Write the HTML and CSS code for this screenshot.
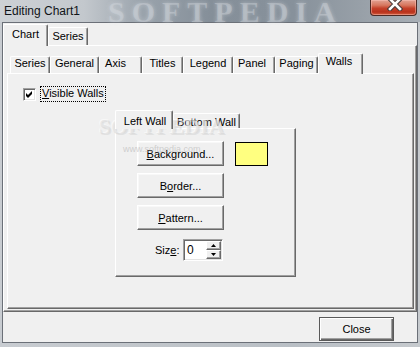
FILE: index.html
```html
<!DOCTYPE html>
<html>
<head>
<meta charset="utf-8">
<title>Editing Chart1</title>
<link rel="stylesheet" href="styles.css">
</head>
<body>
<div class="window">
  <div class="titlebar">
    <span class="title">Editing Chart1</span>
    <div class="tb-close">
      <svg class="tb-x" width="16" height="11" viewBox="0 0 16 11">
        <path d="M3 -1 L13 9 M13 -1 L3 9" stroke="#4a3a3a" stroke-width="4.6" stroke-linecap="square" fill="none"/>
        <path d="M3 -1 L13 9 M13 -1 L3 9" stroke="#ffffff" stroke-width="2.6" stroke-linecap="square" fill="none"/>
      </svg>
    </div>
  </div>

  <div class="client">
    <div class="outer-ctl">
      <div class="tabs outer-tabs">
        <div class="tab sel w-chart">Chart</div>
        <div class="tab w-oseries">Series</div>
      </div>
      <div class="panel outer-panel">
        <div class="inner-ctl">
          <div class="tabs inner-tabs">
            <div class="tab w-series">Series</div>
            <div class="tab w-general">General</div>
            <div class="tab w-axis">Axis</div>
            <div class="tab w-titles">Titles</div>
            <div class="tab w-legend">Legend</div>
            <div class="tab w-panel">Panel</div>
            <div class="tab w-paging">Paging</div>
            <div class="tab sel w-walls">Walls</div>
          </div>
          <div class="panel inner-panel">
            <div class="check-row">
              <span class="checkbox">
                <svg width="7" height="7" viewBox="0 0 7 7"><path d="M0 2 L2 4 L6 0 L6 3 L2 7 L0 5 Z" fill="#000"/></svg>
              </span>
              <span class="focus-label"><u>V</u>isible Walls</span>
            </div>

            <div class="walls-ctl">
              <div class="tabs walls-tabs">
                <div class="tab sel w-left">Left Wall</div>
                <div class="tab w-bottom">Bottom Wall</div>
              </div>
              <div class="panel walls-panel">
                <div class="btn-row">
                  <button class="btn wbtn"><u>B</u>ackground...</button>
                  <span class="swatch"></span>
                </div>
                <button class="btn wbtn gap"><span>B<u>o</u>rder...</span></button>
                <button class="btn wbtn gap"><u>P</u>attern...</button>
                <div class="size-row">
                  <span class="size-label">Siz<u>e</u>:</span>
                  <div class="spin">
                    <span class="spin-val">0</span>
                    <div class="spin-btns">
                      <span class="spin-b"><svg width="5" height="3" viewBox="0 0 5 3"><path d="M0 3 L2.5 0 L5 3 Z" fill="#000"/></svg></span>
                      <span class="spin-b"><svg width="5" height="3" viewBox="0 0 5 3"><path d="M0 0 L5 0 L2.5 3 Z" fill="#000"/></svg></span>
                    </div>
                  </div>
                </div>
              </div>
            </div>
          </div>
        </div>
      </div>
    </div>

    <div class="footer">
      <button class="btn default">Close</button>
    </div>
  </div>

  <span class="wm wm-title">SOFTPEDIA</span>
  <span class="wm wm-mid">SOFTPEDIA</span>
  <span class="wm wm-url">www.softpedia.com</span>
</div>
</body>
</html>
```

FILE: styles.css
```css
* { box-sizing: border-box; }
html, body { margin: 0; padding: 0; }
body {
  width: 420px;
  height: 347px;
  overflow: hidden;
  font: 11px "Liberation Sans", Arial, sans-serif;
  color: #000;
  background: #cfd3d8;
}
u { text-decoration: underline; text-underline-offset: 1px; }

.window {
  position: relative;
  width: 420px;
  height: 347px;
  display: flex;
  flex-direction: column;
  background: linear-gradient(90deg, #c8ccd1 0%, #c0c5ca 40%, #b9bfc5 70%, #c6cace 100%);
  overflow: hidden;
}

/* ---------- title bar ---------- */
.titlebar {
  height: 22px;
  flex: none;
  display: flex;
  justify-content: space-between;
  align-items: flex-start;
  background: linear-gradient(90deg, #cdd1d5 0%, #c3c8cd 20%, #9aa3ac 34%, #858f99 50%, #87919b 70%, #98a0a8 86%, #a8afb6 100%);
}
.title {
  font: 12px "Liberation Sans", Arial, sans-serif;
  color: #101418;
  margin: 5px 0 0 4px;
  line-height: 13px;
}
.tb-close {
  width: 47px;
  height: 16px;
  margin-right: 3px;
  border: 1px solid #4d2a24;
  border-top: none;
  border-radius: 0 0 4px 4px;
  background: linear-gradient(#e2a293 0%, #d7775f 35%, #c4412a 55%, #b9311b 80%, #d25f40 100%);
  box-shadow: inset 0 0 0 1px rgba(255, 200, 190, 0.45);
  display: flex;
  justify-content: center;
  align-items: flex-start;
}
.tb-x { margin-left: 2px; }

/* ---------- client ---------- */
.client {
  margin: 0 2px;
  height: 321px;
  flex: none;
  border: 1px solid #6b7078;
  background: #f0f0f0;
  display: flex;
  flex-direction: column;
}

/* ---------- tabs ---------- */
.tabs {
  display: flex;
  align-items: flex-end;
}
.tab {
  flex: none;
  background: #f0f0f0;
  border: 1px solid;
  border-color: #ffffff #696969 transparent #ffffff;
  border-bottom: none;
  border-radius: 2px 2px 0 0;
  box-shadow: inset -1px 0 0 #a0a0a0;
  text-align: center;
  line-height: 13px;
  white-space: nowrap;
  overflow: visible;
}
.tab.sel {
  margin-bottom: -1px;
  z-index: 2;
}

.outer-ctl { padding-top: 1px; }
.outer-tabs { height: 21px; }
.outer-tabs .tab { height: 18px; padding-top: 2px; }
.outer-tabs .tab.sel { height: 22px; padding-top: 3px; }
.w-chart { width: 45px; }
.w-oseries { width: 40px; }

.inner-ctl { margin: 7px 0 0 3px; }
.inner-tabs { height: 20px; padding-left: 3px; }
.inner-tabs .tab { height: 17px; padding-top: 0; }
.inner-tabs .tab.sel { height: 21px; padding-top: 1px; }
.w-series { width: 40px; }
.w-general { width: 49px; }
.w-axis { width: 43px; padding-right: 10px; }
.w-titles { width: 41px; }
.w-legend { width: 50px; }
.w-panel { width: 42px; padding-right: 4px; }
.w-paging { width: 43px; }
.w-walls { width: 45px; padding-right: 3px; }

.walls-tabs { height: 18px; }
.walls-tabs .tab { height: 15px; padding-top: 2px; }
.walls-tabs .tab.sel { height: 19px; padding-top: 4px; }
.w-left { width: 58px; padding-left: 2px; }
.w-bottom { width: 67px; }

/* ---------- panels ---------- */
.panel {
  background: #f0f0f0;
  border: 1px solid;
  border-color: #ffffff #696969 #696969 #ffffff;
  box-shadow: inset -1px -1px 0 #a0a0a0;
}
.outer-panel { height: 267px; }
.inner-panel { width: 407px; height: 236px; }
.walls-panel {
  width: 181px;
  height: 149px;
  padding: 12px 0 0 21px;
  display: flex;
  flex-direction: column;
  align-items: flex-start;
}

/* ---------- checkbox ---------- */
.check-row {
  display: flex;
  align-items: flex-start;
  height: 16px;
  margin: 12px 0 0 15px;
}
.checkbox {
  width: 13px;
  height: 13px;
  margin-top: 2px;
  background: #ffffff;
  border: 1px solid;
  border-color: #a0a0a0 #ffffff #ffffff #a0a0a0;
  box-shadow: inset 1px 1px 0 #696969, inset -1px -1px 0 #e3e3e3;
  display: flex;
  align-items: center;
  justify-content: center;
}
.focus-label {
  margin-left: 4px;
  height: 16px;
  border: 1px dotted #000;
  padding: 0 1px;
  line-height: 13px;
}

.walls-ctl { margin: 8px 0 0 107px; }

/* ---------- buttons ---------- */
.btn {
  font: 11px "Liberation Sans", Arial, sans-serif;
  color: #000;
  background: #f0f0f0;
  padding: 0;
  margin: 0;
  border: 1px solid;
  border-color: #ffffff #696969 #696969 #ffffff;
  box-shadow: inset -1px -1px 0 #a0a0a0, inset 1px 1px 0 #f8f8f8;
  display: flex;
  align-items: center;
  justify-content: center;
}
.wbtn { width: 87px; height: 25px; }
.gap { margin-top: 7px; }
.btn-row { display: flex; align-items: flex-start; }
.swatch {
  width: 33px;
  height: 24px;
  margin: 1px 0 0 11px;
  background: #ffff80;
  border: 1px solid #000;
}

.size-row {
  display: flex;
  align-items: center;
  margin: 9px 0 0 18px;
}
.size-label { width: 28px; }
.spin {
  width: 40px;
  height: 22px;
  background: #ffffff;
  border: 1px solid;
  border-color: #a0a0a0 #ffffff #ffffff #a0a0a0;
  box-shadow: inset 1px 1px 0 #696969, inset -1px -1px 0 #e3e3e3;
  padding: 1px;
  display: flex;
  align-items: stretch;
}
.spin-val {
  flex: 1;
  padding-left: 2px;
  line-height: 18px;
  font-size: 12px;
}
.spin-btns {
  width: 15px;
  display: flex;
  flex-direction: column;
}
.spin-b {
  flex: 1;
  background: #f0f0f0;
  border: 1px solid;
  border-color: #ffffff #696969 #696969 #ffffff;
  box-shadow: inset -1px -1px 0 #a0a0a0;
  display: flex;
  align-items: center;
  justify-content: center;
}

/* ---------- footer ---------- */
.footer {
  height: 30px;
  padding-top: 5px;
  display: flex;
  justify-content: flex-end;
  align-items: flex-start;
}
.default {
  width: 75px;
  height: 24px;
  margin-right: 23px;
  border: 1px solid #5a5a5a;
  box-shadow: inset 1px 1px 0 #ffffff, inset -1px -1px 0 #696969, inset -2px -2px 0 #a0a0a0;
}

/* ---------- watermarks (overlays) ---------- */
.wm {
  position: absolute;
  pointer-events: none;
  white-space: nowrap;
}
.wm-title {
  left: 108px;
  top: -5px;
  font: bold 30px "Liberation Serif", "Times New Roman", serif;
  letter-spacing: 7px;
  color: rgba(214, 218, 224, 0.38);
  text-shadow: 0 0 4px rgba(225, 228, 232, 0.45);
}
.wm-mid {
  left: 99px;
  top: 114px;
  font: bold 22px "Liberation Serif", "Times New Roman", serif;
  color: rgba(215, 215, 215, 0.45);
  text-shadow: -1px -1px 0 rgba(255, 255, 255, 0.5), 1px 1px 0 rgba(190, 190, 190, 0.3);
}
.wm-url {
  left: 123px;
  top: 144px;
  font: 9px "Liberation Sans", Arial, sans-serif;
  color: rgba(170, 170, 170, 0.5);
}
```
